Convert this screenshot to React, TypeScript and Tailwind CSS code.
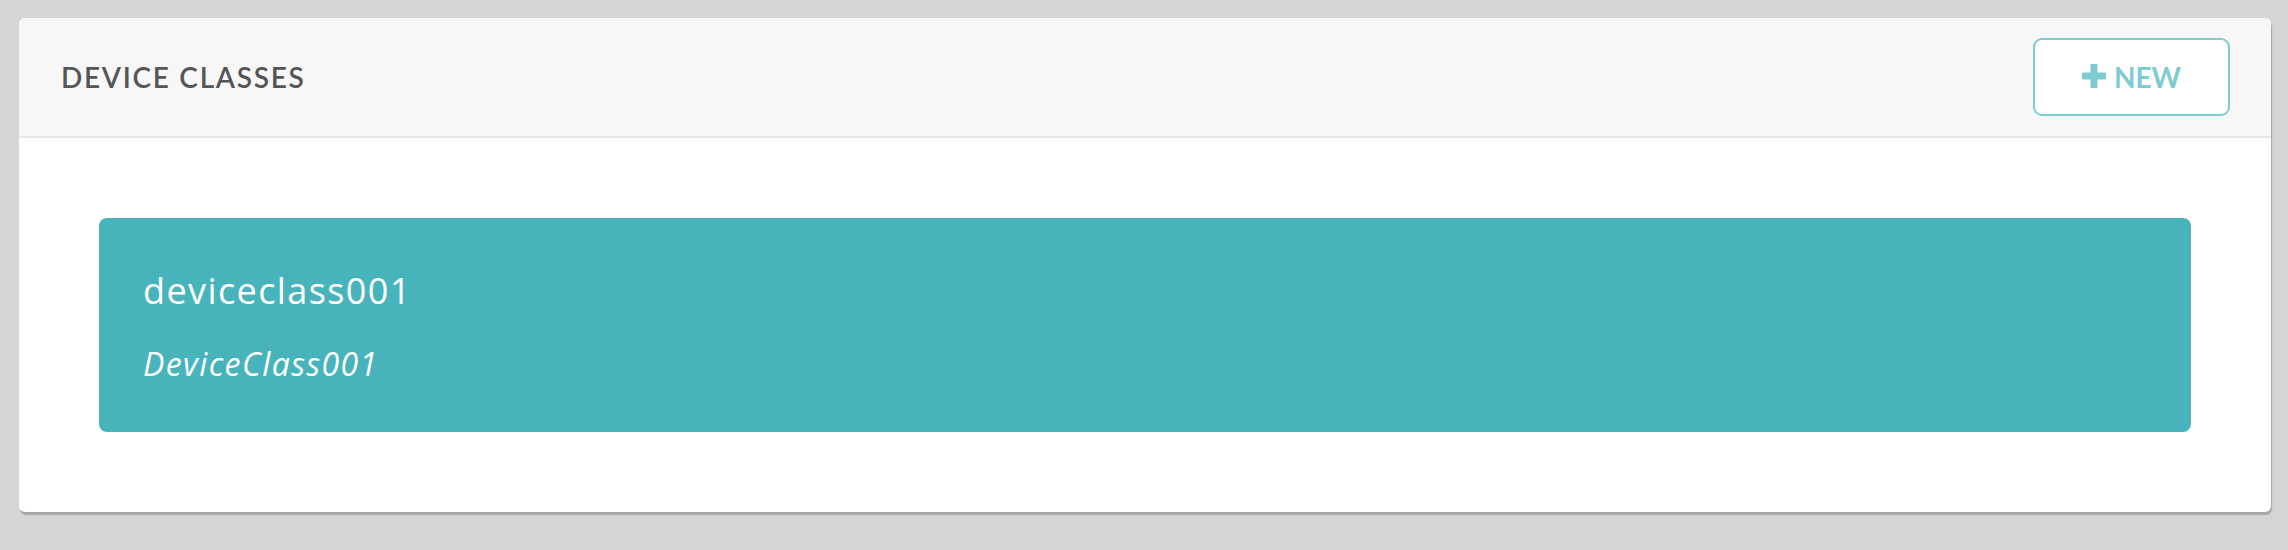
import React from 'react'

// device classes panel

function PlusIcon() {
    return (
        <svg width="24" height="24" viewBox="0 0 24 24" className="shrink-0 -mt-[3px]">
            <rect x="8.5" y="0" width="7" height="24" rx="1" fill="#7fcbd2" />
            <rect x="0" y="8.5" width="24" height="7" rx="1" fill="#7fcbd2" />
        </svg>
    )
}

function DeviceClassCard({ name, label }: { name: string; label: string }) {
    return (
        <div
            className="rounded-[8px] bg-[#47b4bc] px-[44px] pb-[52px] pt-[55px] text-white"
            style={{ fontFamily: '"Open Sans", "Noto Sans", sans-serif' }}
        >
            <div className="text-[36px] leading-none tracking-[1.4px]">{name}</div>
            <div className="mt-[39px] text-[32px] italic leading-none tracking-[1.4px]">{label}</div>
        </div>
    )
}

export default function App() {
    return (
        <div
            className="min-h-[550px] bg-[#d5d5d5] pl-[19px] pr-[17px] pt-[18px]"
            style={{ fontFamily: 'Lato, "Open Sans", sans-serif' }}
        >
            <div className="overflow-hidden rounded-[6px] bg-white shadow-[1px_3px_1px_rgba(0,0,0,0.22)]">
                <div className="flex h-[120px] items-center justify-between border-b-2 border-[#e6e6e6] bg-[#f7f7f7] pl-[42px] pr-[41px]">
                    <h2 className="text-[28px] font-semibold uppercase leading-none tracking-[1.7px] text-[#555555]">
                        Device Classes
                    </h2>
                    <button className="flex h-[78px] w-[197px] items-center justify-center gap-[8px] rounded-[9px] border-2 border-[#7ecbd2] bg-white text-[28px] font-bold leading-none text-[#7fcbd2]">
                        <PlusIcon />
                        <span>NEW</span>
                    </button>
                </div>
                <div className="p-[80px]">
                    <DeviceClassCard name="deviceclass001" label="DeviceClass001" />
                </div>
            </div>
        </div>
    )
}
